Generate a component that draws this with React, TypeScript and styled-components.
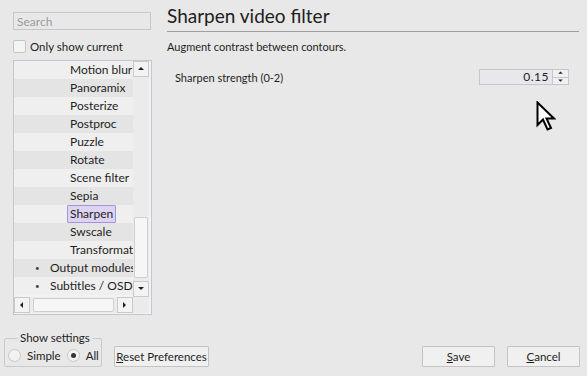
import React from 'react';
import styled, { createGlobalStyle, css } from 'styled-components';

const GlobalStyle = createGlobalStyle`
  html, body {
    margin: 0;
    padding: 0;
    background: #e8e8e8;
  }
  body {
    font-family: Lato, "Noto Sans", sans-serif;
    font-size: 11px;
    color: #1e1e1e;
  }
`;

type TreeItem = { label: string; level: 0 | 1; selected?: boolean };

const items: TreeItem[] = [
  { label: 'Motion blur', level: 1 },
  { label: 'Panoramix', level: 1 },
  { label: 'Posterize', level: 1 },
  { label: 'Postproc', level: 1 },
  { label: 'Puzzle', level: 1 },
  { label: 'Rotate', level: 1 },
  { label: 'Scene filter', level: 1 },
  { label: 'Sepia', level: 1 },
  { label: 'Sharpen', level: 1, selected: true },
  { label: 'Swscale', level: 1 },
  { label: 'Transformation', level: 1 },
  { label: 'Output modules', level: 0 },
  { label: 'Subtitles / OSD', level: 0 },
];

const Arrow = ({ dir }: { dir: 'up' | 'down' | 'left' | 'right' }) => {
  const pts = {
    up: '1,5 4,2 7,5',
    down: '1,2 4,5 7,2',
    left: '5,1 2,4 5,7',
    right: '2,1 5,4 2,7',
  }[dir];
  return (
    <svg width="8" height="8" viewBox="0 0 8 8">
      <polygon points={pts} fill="#202020" />
    </svg>
  );
};

const App: React.FC = (): JSX.Element => {
  return (
    <>
      <GlobalStyle />
      <Window>
        <Main>
          <Sidebar>
            <SearchBox placeholder="Search" />
            <CheckRow>
              <CheckBox />
              <span>Only show current</span>
            </CheckRow>
            <TreeFrame>
              <TreeViewport>
                {items.map((item, i) => (
                  <TreeRow key={item.label} $alt={i % 2 === 1}>
                    {item.level === 0 && <Bullet>•</Bullet>}
                    <TreeLabel $level={item.level} $selected={item.selected}>
                      {item.label}
                    </TreeLabel>
                  </TreeRow>
                ))}
              </TreeViewport>
              <VScroll>
                <ScrollButton>
                  <Arrow dir="up" />
                </ScrollButton>
                <VTrack>
                  <VThumb />
                </VTrack>
                <ScrollButton>
                  <Arrow dir="down" />
                </ScrollButton>
              </VScroll>
              <HScroll>
                <ScrollButton>
                  <Arrow dir="left" />
                </ScrollButton>
                <HTrack>
                  <HThumb />
                </HTrack>
                <ScrollButton>
                  <Arrow dir="right" />
                </ScrollButton>
              </HScroll>
              <Corner />
            </TreeFrame>
          </Sidebar>

          <Panel>
            <Title>Sharpen video filter</Title>
            <Description>Augment contrast between contours.</Description>
            <OptionRow>
              <span>Sharpen strength (0-2)</span>
              <SpinBox>
                <SpinValue>0.15</SpinValue>
                <SpinButtons>
                  <SpinButton>
                    <Arrow dir="up" />
                  </SpinButton>
                  <SpinButton>
                    <Arrow dir="down" />
                  </SpinButton>
                </SpinButtons>
              </SpinBox>
            </OptionRow>
          </Panel>
        </Main>

        <Footer>
          <GroupBox>
            <GroupLegend>Show settings</GroupLegend>
            <Radio>
              <RadioCircle />
              Simple
            </Radio>
            <Radio>
              <RadioCircle $checked />
              All
            </Radio>
          </GroupBox>
          <Button $width={95}>
            <u>R</u>eset Preferences
          </Button>
          <Spacer />
          <Button $width={73}>
            <u>S</u>ave
          </Button>
          <Button $width={73}>
            <u>C</u>ancel
          </Button>
        </Footer>

        <Cursor width="20" height="31" viewBox="0 0 20 31">
          <path
            d="M1.5 1.5 L1.5 24 L7 18.5 L11.5 28.5 L15 27 L10.5 17.5 L18 17.5 Z"
            fill="#ffffff"
            stroke="#000000"
            strokeWidth="2"
            strokeLinejoin="miter"
          />
        </Cursor>
      </Window>
    </>
  );
};

export default App;

const Window = styled.div`
  position: relative;
  width: 587px;
  height: 376px;
  display: flex;
  flex-direction: column;
  overflow: hidden;
`;

const Main = styled.div`
  display: flex;
  flex: 1;
`;

const Sidebar = styled.div`
  width: 138px;
  padding: 12px 0 0 13px;
  display: flex;
  flex-direction: column;
`;

const SearchBox = styled.input`
  box-sizing: border-box;
  width: 138px;
  height: 18px;
  margin: 0;
  padding: 0 3px;
  border: 1px solid #c6c6ce;
  background: #e8e8e8;
  font: inherit;
  font-size: 12px;
  outline: none;
  &::placeholder {
    color: #9a9a9a;
  }
`;

const CheckRow = styled.label`
  display: flex;
  align-items: center;
  gap: 4px;
  height: 14px;
  margin-top: 9px;
  font-size: 11.5px;
`;

const CheckBox = styled.span`
  box-sizing: border-box;
  width: 13px;
  height: 13px;
  border: 1px solid #c4c4c4;
  background: #f4f4f4;
  border-radius: 2px;
`;

const TreeFrame = styled.div`
  box-sizing: border-box;
  margin-top: 7px;
  width: 139px;
  height: 255px;
  border: 1px solid #c6c6ce;
  display: grid;
  grid-template-columns: 119px 16px;
  grid-template-rows: 236px 16px;
  background: #f2f2f2;
`;

const TreeViewport = styled.div`
  overflow: hidden;
`;

const TreeRow = styled.div<{ $alt: boolean }>`
  position: relative;
  height: 18px;
  display: flex;
  align-items: center;
  white-space: nowrap;
  background: ${(p) => (p.$alt ? '#e4e4e4' : '#efefef')};
`;

const Bullet = styled.span`
  position: absolute;
  left: 21px;
  font-size: 8px;
  color: #444;
`;

const TreeLabel = styled.span<{ $level: 0 | 1; $selected?: boolean }>`
  box-sizing: border-box;
  height: 18px;
  line-height: 16px;
  margin-left: ${(p) => (p.$level === 1 ? 53 : 33)}px;
  padding: 0 2px;
  border: 1px solid transparent;
  font-size: 12px;
  ${(p) =>
    p.$selected &&
    css`
      background: #dcd4f2;
      border-color: #a396d6;
      border-radius: 1px;
    `}
`;

const VScroll = styled.div`
  display: flex;
  flex-direction: column;
  background: #ebebeb;
`;

const ScrollButton = styled.div`
  box-sizing: border-box;
  width: 16px;
  height: 16px;
  display: flex;
  align-items: center;
  justify-content: center;
  border: 1px solid #c9c9c9;
  background: #f3f3f3;
`;

const VTrack = styled.div`
  flex: 1;
  display: flex;
  flex-direction: column;
  justify-content: flex-end;
  padding: 3px 0;
`;

const VThumb = styled.div`
  box-sizing: border-box;
  height: 61px;
  margin: 0 1px;
  border: 1px solid #cfcfcf;
  border-radius: 2px;
  background: #f6f6f6;
`;

const HScroll = styled.div`
  display: flex;
  background: #ebebeb;
`;

const HTrack = styled.div`
  flex: 1;
  display: flex;
  padding: 0 3px;
`;

const HThumb = styled.div`
  box-sizing: border-box;
  flex: 1;
  margin: 1px 0;
  border: 1px solid #cfcfcf;
  border-radius: 2px;
  background: #f6f6f6;
`;

const Corner = styled.div`
  background: #ebebeb;
`;

const Panel = styled.div`
  width: 412px;
  margin-left: 16px;
  display: flex;
  flex-direction: column;
`;

const Title = styled.h1`
  margin: 0;
  padding-top: 2px;
  height: 32px;
  box-sizing: border-box;
  font-size: 19px;
  font-weight: 400;
  line-height: 28px;
  color: #202020;
  border-bottom: 1px solid #a0a0a0;
`;

const Description = styled.p`
  margin: 7px 0 0;
  line-height: 16px;
`;

const OptionRow = styled.div`
  display: flex;
  align-items: center;
  justify-content: space-between;
  height: 16px;
  margin: 14px 10px 0 8px;
`;

const SpinBox = styled.div`
  box-sizing: border-box;
  width: 90px;
  height: 16px;
  display: flex;
  border: 1px solid #c6c6ce;
  background: #e8e8ec;
`;

const SpinValue = styled.span`
  flex: 1;
  text-align: right;
  padding-right: 3px;
  line-height: 14px;
  font-size: 12px;
  letter-spacing: 0.5px;
  color: #202020;
`;

const SpinButtons = styled.div`
  display: flex;
  flex-direction: column;
  width: 15px;
  border-left: 1px solid #c6c6ce;
`;

const SpinButton = styled.div`
  flex: 1;
  display: flex;
  align-items: center;
  justify-content: center;
  background: #f0f0f0;
  & + & {
    border-top: 1px solid #c6c6ce;
  }
  svg {
    width: 7px;
    height: 6px;
  }
`;

const Footer = styled.div`
  display: flex;
  align-items: flex-end;
  gap: 12px;
  padding: 0 7px 9px 4px;
`;

const GroupBox = styled.fieldset`
  box-sizing: border-box;
  width: 98px;
  height: 35px;
  margin: 0;
  padding: 0 0 0 3px;
  border: 1px solid #cacaca;
  border-radius: 2px;
  display: flex;
  align-items: center;
  gap: 6px;
  font-size: 11.5px;
`;

const GroupLegend = styled.legend`
  padding: 0 2px;
  margin-left: 10px;
  line-height: 12px;
`;

const Radio = styled.label`
  display: flex;
  align-items: center;
  gap: 6px;
`;

const RadioCircle = styled.span<{ $checked?: boolean }>`
  box-sizing: border-box;
  width: 13px;
  height: 13px;
  border-radius: 50%;
  border: 1px solid #c8c8c8;
  background: #f2f2f2;
  display: flex;
  align-items: center;
  justify-content: center;
  &::after {
    content: '';
    width: 5px;
    height: 5px;
    border-radius: 50%;
    background: ${(p) => (p.$checked ? '#333' : 'transparent')};
  }
`;

const Button = styled.button<{ $width: number }>`
  box-sizing: border-box;
  width: ${(p) => p.$width}px;
  height: 21px;
  padding: 0;
  border: 1px solid #c4c4c4;
  border-radius: 1px;
  background: #f0f0f0;
  font: inherit;
  font-size: 11.5px;
  color: #1e1e1e;
  white-space: nowrap;
  u {
    text-decoration-thickness: 1px;
  }
`;

const Spacer = styled.div`
  flex: 1;
`;

const Cursor = styled.svg`
  position: absolute;
  left: 536px;
  top: 101px;
`;
